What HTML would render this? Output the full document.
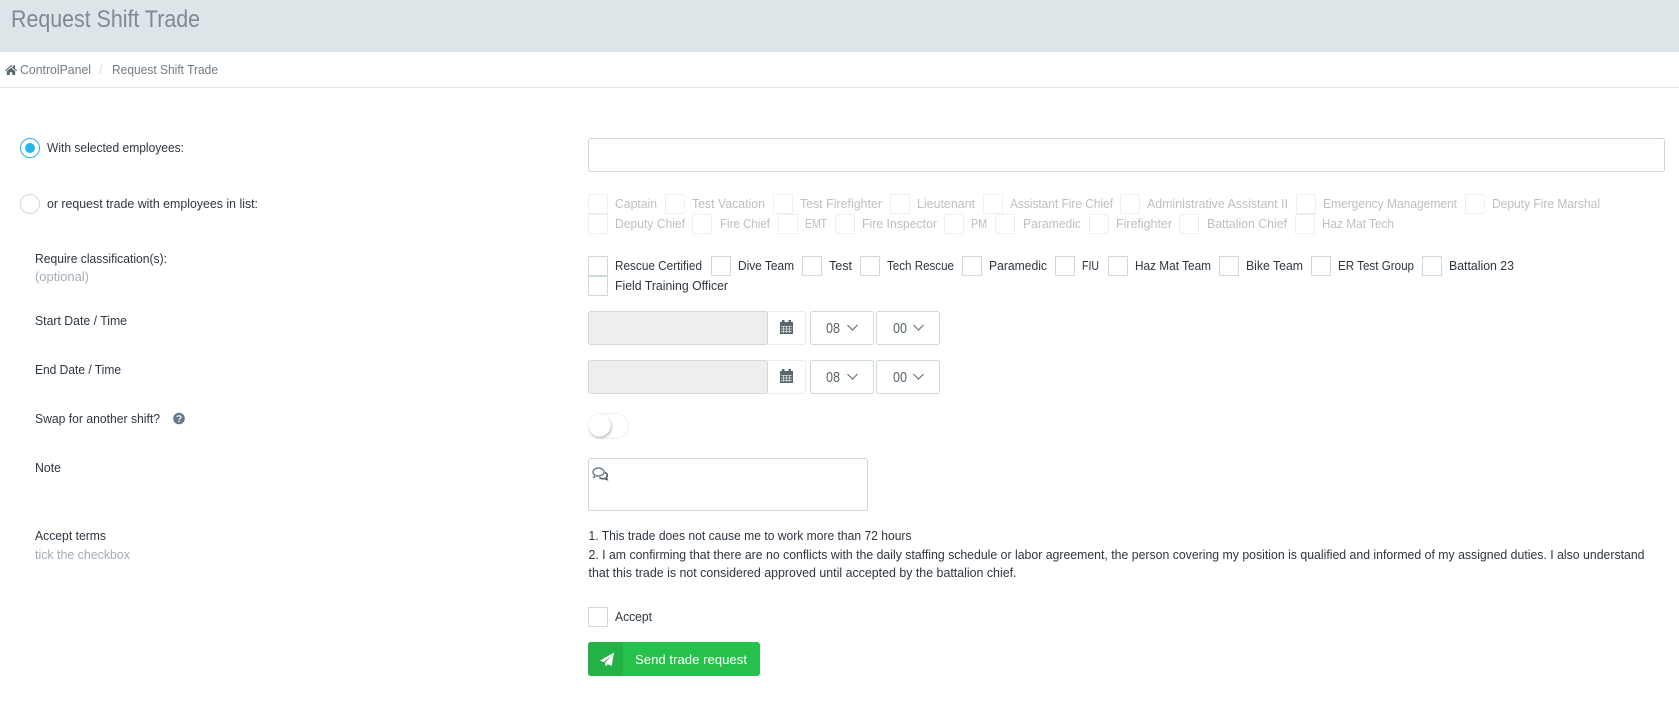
<!DOCTYPE html>
<html lang="en"><head><meta charset="utf-8"><title>Request Shift Trade</title>
<style>
html,body{margin:0;padding:0;width:1679px;height:721px;overflow:hidden;background:#fff}
svg{display:block}
text{font-family:"Liberation Sans",sans-serif;font-size:12.5px;fill:#2c3742}
.d{fill:#bcbfc3}
.m{fill:#a4adb5}
.b{fill:#6f7b85}
.c{fill:#fff;stroke:#cfdadd}
.e{fill:#fff;stroke:#edf0f1}
.f{fill:#fff;stroke:#cfdadd}
.ch{fill:none;stroke:#5f666c;stroke-width:1}
</style></head><body>
<svg width="1679" height="721" viewBox="0 0 1679 721" xmlns="http://www.w3.org/2000/svg">
<defs><filter id="s" x="-30%" y="-30%" width="170%" height="170%"><feDropShadow dx="1" dy="1.5" stdDeviation="1.2" flood-color="#000" flood-opacity=".28"/></filter></defs>
<rect width="1679" height="52" fill="#dde5e9"/>
<text x="11" y="27" textLength="189" lengthAdjust="spacingAndGlyphs" style="font-size:24px;fill:#7d8a94">Request Shift Trade</text>
<rect y="87" width="1679" height="1" fill="#dee5e7"/>
<path d="M5 70.500 11 65l2.200 2v-1.600h1.900v3.300l2 1.800-.8.8L11 66.300 5.800 71.300zM6.800 71.300 11 67.500l4.200 3.800V75h-3v-2.800H9.800V75h-3z" fill="#58666e"/>
<text x="20" y="74" textLength="71" lengthAdjust="spacingAndGlyphs" class="b">ControlPanel</text>
<text x="99" y="74" style="fill:#d5dade">/</text>
<text x="112" y="74" textLength="106" lengthAdjust="spacingAndGlyphs" class="b">Request Shift Trade</text>

<circle cx="30" cy="148" r="9.500" fill="#fff" stroke="#23b7e5"/><circle cx="30" cy="148" r="5" fill="#23b7e5"/>
<text x="47" y="152" textLength="137" lengthAdjust="spacingAndGlyphs">With selected employees:</text>
<circle cx="30" cy="204" r="9.500" fill="#fff" stroke="#cfdadd"/>
<text x="47" y="208" textLength="211" lengthAdjust="spacingAndGlyphs">or request trade with employees in list:</text>
<rect x="588.500" y="138.500" width="1076" height="33" rx="2" class="f"/>

<g class="e">
<rect x="588.500" y="194.500" width="19" height="19"/><rect x="665.500" y="194.500" width="19" height="19"/><rect x="773.500" y="194.500" width="19" height="19"/><rect x="890.500" y="194.500" width="19" height="19"/><rect x="983.500" y="194.500" width="19" height="19"/><rect x="1120.500" y="194.500" width="19" height="19"/><rect x="1296.500" y="194.500" width="19" height="19"/><rect x="1465.500" y="194.500" width="19" height="19"/>
<rect x="588.500" y="214.500" width="19" height="19"/><rect x="692.500" y="214.500" width="19" height="19"/><rect x="778.500" y="214.500" width="19" height="19"/><rect x="835.500" y="214.500" width="19" height="19"/><rect x="944.500" y="214.500" width="19" height="19"/><rect x="995.500" y="214.500" width="19" height="19"/><rect x="1089.500" y="214.500" width="19" height="19"/><rect x="1179.500" y="214.500" width="19" height="19"/><rect x="1295.500" y="214.500" width="19" height="19"/>
</g>
<text class="d" x="615" y="208" textLength="42" lengthAdjust="spacingAndGlyphs">Captain</text>
<text class="d" x="692" y="208" textLength="73" lengthAdjust="spacingAndGlyphs">Test Vacation</text>
<text class="d" x="800" y="208" textLength="82" lengthAdjust="spacingAndGlyphs">Test Firefighter</text>
<text class="d" x="917" y="208" textLength="58" lengthAdjust="spacingAndGlyphs">Lieutenant</text>
<text class="d" x="1010" y="208" textLength="103" lengthAdjust="spacingAndGlyphs">Assistant Fire Chief</text>
<text class="d" x="1147" y="208" textLength="141" lengthAdjust="spacingAndGlyphs">Administrative Assistant II</text>
<text class="d" x="1323" y="208" textLength="134" lengthAdjust="spacingAndGlyphs">Emergency Management</text>
<text class="d" x="1492" y="208" textLength="108" lengthAdjust="spacingAndGlyphs">Deputy Fire Marshal</text>
<text class="d" x="615" y="228" textLength="70" lengthAdjust="spacingAndGlyphs">Deputy Chief</text>
<text class="d" x="720" y="228" textLength="50" lengthAdjust="spacingAndGlyphs">Fire Chief</text>
<text class="d" x="805" y="228" textLength="22" lengthAdjust="spacingAndGlyphs">EMT</text>
<text class="d" x="862" y="228" textLength="75" lengthAdjust="spacingAndGlyphs">Fire Inspector</text>
<text class="d" x="971" y="228" textLength="16" lengthAdjust="spacingAndGlyphs">PM</text>
<text class="d" x="1023" y="228" textLength="58" lengthAdjust="spacingAndGlyphs">Paramedic</text>
<text class="d" x="1116" y="228" textLength="56" lengthAdjust="spacingAndGlyphs">Firefighter</text>
<text class="d" x="1207" y="228" textLength="80" lengthAdjust="spacingAndGlyphs">Battalion Chief</text>
<text class="d" x="1322" y="228" textLength="72" lengthAdjust="spacingAndGlyphs">Haz Mat Tech</text>

<text x="35" y="263" textLength="132" lengthAdjust="spacingAndGlyphs">Require classification(s):</text>
<text class="m" x="35" y="281" textLength="54" lengthAdjust="spacingAndGlyphs">(optional)</text>
<g class="c">
<rect x="588.500" y="256.500" width="19" height="19"/><rect x="711.500" y="256.500" width="19" height="19"/><rect x="802.500" y="256.500" width="19" height="19"/><rect x="860.500" y="256.500" width="19" height="19"/><rect x="962.500" y="256.500" width="19" height="19"/><rect x="1055.500" y="256.500" width="19" height="19"/><rect x="1108.500" y="256.500" width="19" height="19"/><rect x="1219.500" y="256.500" width="19" height="19"/><rect x="1311.500" y="256.500" width="19" height="19"/><rect x="1422.500" y="256.500" width="19" height="19"/>
<rect x="588.500" y="276.500" width="19" height="19"/>
</g>
<text x="615" y="270" textLength="87" lengthAdjust="spacingAndGlyphs">Rescue Certified</text>
<text x="738" y="270" textLength="56" lengthAdjust="spacingAndGlyphs">Dive Team</text>
<text x="829" y="270" textLength="23" lengthAdjust="spacingAndGlyphs">Test</text>
<text x="887" y="270" textLength="67" lengthAdjust="spacingAndGlyphs">Tech Rescue</text>
<text x="989" y="270" textLength="58" lengthAdjust="spacingAndGlyphs">Paramedic</text>
<text x="1082" y="270" textLength="17" lengthAdjust="spacingAndGlyphs">FIU</text>
<text x="1135" y="270" textLength="76" lengthAdjust="spacingAndGlyphs">Haz Mat Team</text>
<text x="1246" y="270" textLength="57" lengthAdjust="spacingAndGlyphs">Bike Team</text>
<text x="1338" y="270" textLength="76" lengthAdjust="spacingAndGlyphs">ER Test Group</text>
<text x="1449" y="270" textLength="65" lengthAdjust="spacingAndGlyphs">Battalion 23</text>
<text x="615" y="290" textLength="113" lengthAdjust="spacingAndGlyphs">Field Training Officer</text>

<text x="35" y="325" textLength="92" lengthAdjust="spacingAndGlyphs">Start Date / Time</text>
<rect x="767.500" y="311.500" width="38" height="33" rx="2" fill="#fff" stroke="#e8edee"/>
<rect x="588.500" y="311.500" width="179" height="33" rx="2" fill="#eee" stroke="#cfdadd"/>
<path d="M780 322h13v12h-13zM782 320h2.500v2H782zM788.500 320h2.500v2h-2.500z" fill="#58666e"/>
<path d="M781 326.500h11M781 329h11M781 331.500h11M783.500 326v7M786.500 326v7M789.500 326v7" stroke="#d6dadd" stroke-width=".8"/>
<rect x="810.500" y="311.500" width="63" height="33" rx="2" class="f"/>
<rect x="876.500" y="311.500" width="63" height="33" rx="2" class="f"/>
<text x="826" y="333" textLength="14" lengthAdjust="spacingAndGlyphs" style="font-size:15px;fill:#58666e">08</text>
<path class="ch" d="M847.500 325l5 5 5-5"/>
<text x="893" y="333" textLength="14" lengthAdjust="spacingAndGlyphs" style="font-size:15px;fill:#58666e">00</text>
<path class="ch" d="M913.500 325l5 5 5-5"/>

<text x="35" y="374" textLength="86" lengthAdjust="spacingAndGlyphs">End Date / Time</text>
<rect x="767.500" y="360.500" width="38" height="33" rx="2" fill="#fff" stroke="#e8edee"/>
<rect x="588.500" y="360.500" width="179" height="33" rx="2" fill="#eee" stroke="#cfdadd"/>
<path d="M780 371h13v12h-13zM782 369h2.500v2H782zM788.500 369h2.500v2h-2.500z" fill="#58666e"/>
<path d="M781 375.500h11M781 378h11M781 380.500h11M783.500 375v7M786.500 375v7M789.500 375v7" stroke="#d6dadd" stroke-width=".8"/>
<rect x="810.500" y="360.500" width="63" height="33" rx="2" class="f"/>
<rect x="876.500" y="360.500" width="63" height="33" rx="2" class="f"/>
<text x="826" y="382" textLength="14" lengthAdjust="spacingAndGlyphs" style="font-size:15px;fill:#58666e">08</text>
<path class="ch" d="M847.500 374l5 5 5-5"/>
<text x="893" y="382" textLength="14" lengthAdjust="spacingAndGlyphs" style="font-size:15px;fill:#58666e">00</text>
<path class="ch" d="M913.500 374l5 5 5-5"/>

<text x="35" y="423" textLength="125" lengthAdjust="spacingAndGlyphs">Swap for another shift?</text>
<circle cx="179" cy="418.500" r="5.800" fill="#66788a"/>
<path d="M177 417c.2-1.500 3.900-1.700 4 .2.100 1.300-1.800 1.300-1.900 2.600" fill="none" stroke="#fff" stroke-width="1.200"/><rect x="178.400" y="420.600" width="1.400" height="1.400" fill="#fff"/>
<rect x="588.500" y="413.500" width="40" height="25" rx="12.500" fill="#fff" stroke="#eceff0"/>
<circle cx="599.500" cy="425.500" r="11" fill="#fff" filter="url(#s)"/>

<text x="35" y="472" textLength="26" lengthAdjust="spacingAndGlyphs">Note</text>
<rect x="588.500" y="458.500" width="279" height="52" rx="2" class="f"/>
<ellipse cx="598.500" cy="472" rx="5.500" ry="4" fill="#fff" stroke="#6e7a84" stroke-width="1.400"/>
<path d="M595 475l-1.500 2.500 3.500-1.300" fill="#fff" stroke="#6e7a84"/>
<path d="M605 472.500c2.500 1.300 3 3.600 1.200 5l.8 2-3-1c-1.500.5-3.500 0-4.700-1" fill="none" stroke="#58666e" stroke-width="1.700"/>

<text x="35" y="540" textLength="71" lengthAdjust="spacingAndGlyphs">Accept terms</text>
<text class="m" x="35" y="559" textLength="95" lengthAdjust="spacingAndGlyphs">tick the checkbox</text>
<text x="588.500" y="540" textLength="323" lengthAdjust="spacingAndGlyphs">1. This trade does not cause me to work more than 72 hours</text>
<text x="588.500" y="559" textLength="1056" lengthAdjust="spacingAndGlyphs">2. I am confirming that there are no conflicts with the daily staffing schedule or labor agreement, the person covering my position is qualified and informed of my assigned duties. I also understand</text>
<text x="588.500" y="577" textLength="428" lengthAdjust="spacingAndGlyphs">that this trade is not considered approved until accepted by the battalion chief.</text>

<rect x="588.500" y="607.500" width="19" height="19" class="c"/>
<text x="615" y="621" textLength="37" lengthAdjust="spacingAndGlyphs">Accept</text>

<rect x="588" y="642" width="172" height="34" rx="3" fill="#27c24c"/>
<path d="M591 642h32v34h-32a3 3 0 0 1-3-3v-28a3 3 0 0 1 3-3z" fill="#24b146"/>
<path d="M614 652.500l-2.300 13.500-4-1.800-2 2.300-.6-3.700 6.500-7.300-8 6.600-3.600-1.600z" fill="#fff"/>
<text x="635" y="664" textLength="112" lengthAdjust="spacingAndGlyphs" style="fill:#fff;font-size:13px">Send trade request</text>
</svg>
</body></html>
